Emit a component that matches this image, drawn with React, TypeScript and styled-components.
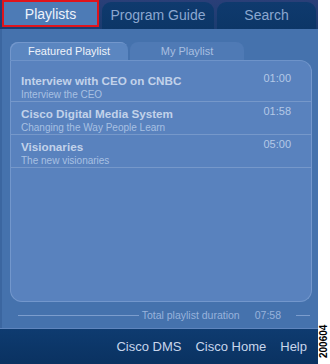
import React from "react";
import styled, { createGlobalStyle } from "styled-components";

const GlobalStyle = createGlobalStyle`
  html, body {
    margin: 0;
    padding: 0;
    background: #ffffff;
  }
  body {
    font-family: "Liberation Sans", Arial, sans-serif;
  }
`;

interface Item {
  title: string;
  subtitle: string;
  time: string;
}

const items: Item[] = [
  { title: "Interview with CEO on CNBC", subtitle: "Interview the CEO", time: "01:00" },
  { title: "Cisco Digital Media System", subtitle: "Changing the Way People Learn", time: "01:58" },
  { title: "Visionaries", subtitle: "The new visionaries", time: "05:00" },
];

const Page = styled.div`
  display: flex;
  width: 330px;
  height: 364px;
`;

const Main = styled.div`
  width: 318px;
  display: flex;
  flex-direction: column;
  background: #4572ad;
`;

const TabBar = styled.div`
  height: 29px;
  display: flex;
  align-items: flex-end;
  gap: 3px;
  padding: 0 2px;
  background: linear-gradient(#2a3f78, #1a3c70);
  box-sizing: border-box;
`;

const Tab = styled.div<{ $active?: boolean; $w: number }>`
  width: ${(p) => p.$w}px;
  height: 27px;
  box-sizing: border-box;
  display: flex;
  align-items: center;
  justify-content: center;
  padding-bottom: ${(p) => (p.$active ? "0" : "2px")};
  font-size: 14px;
  color: ${(p) => (p.$active ? "#eef3fb" : "#8ba7d0")};
  background: ${(p) => (p.$active ? "#4d7bb6" : "linear-gradient(#0f3a6e, #0c3667)")};
  border: ${(p) => (p.$active ? "2px solid #e0141c" : "none")};
  border-radius: ${(p) => (p.$active ? "0" : "9px 9px 0 0")};
  margin-bottom: ${(p) => (p.$active ? "2px" : "0")};
`;

const Body = styled.div`
  flex: 1;
  display: flex;
  flex-direction: column;
  padding: 13px 6px 0 8px;
  border-left: 2px solid #3b66a0;
`;

const SubTabs = styled.div`
  display: flex;
  gap: 2px;
  height: 18px;
`;

const SubTab = styled.div<{ $active?: boolean; $w: number }>`
  width: ${(p) => p.$w}px;
  display: flex;
  align-items: center;
  justify-content: center;
  font-size: 11px;
  color: ${(p) => (p.$active ? "#eef3fb" : "#a9bfe0")};
  background: ${(p) => (p.$active ? "#5b86c0" : "#4f7ab5")};
  border-radius: 8px 8px 0 0;
  box-shadow: ${(p) => (p.$active ? "inset 1px 1px 0 #7397cc" : "none")};
`;

const Panel = styled.div`
  height: 242px;
  box-sizing: border-box;
  background: #5982be;
  border: 1px solid #7397cc;
  border-top-color: #6e93c9;
  border-radius: 0 12px 12px 12px;
  padding-top: 8px;
  display: flex;
  flex-direction: column;
`;

const Row = styled.div`
  height: 33px;
  box-sizing: border-box;
  padding: 4px 20px 0 10px;
  border-bottom: 1px solid #7698ca;
  display: grid;
  grid-template-columns: 1fr auto;
  grid-template-rows: 15px 13px;
`;

const Title = styled.div`
  font-size: 11.7px;
  font-weight: bold;
  color: #c2d2ea;
  line-height: 15px;
`;

const Time = styled.div`
  font-size: 11px;
  color: #b4c8e6;
  line-height: 11px;
`;

const Subtitle = styled.div`
  grid-column: 1 / 3;
  font-size: 10px;
  color: #a8c0e2;
  line-height: 13px;
`;

const TotalRow = styled.div`
  height: 26px;
  display: flex;
  align-items: center;
  gap: 3px;
  padding: 0 2px 0 8px;
`;

const Rule = styled.div<{ $w?: number }>`
  height: 1px;
  background: #7c9dcd;
  flex: ${(p) => (p.$w ? `0 0 ${p.$w}px` : "1")};
`;

const TotalText = styled.span`
  font-size: 10.5px;
  color: #98b3dc;
  margin-right: 12px;
`;

const TotalTime = styled.span`
  font-size: 10.5px;
  color: #98b3dc;
  margin-right: 12px;
`;

const Footer = styled.div`
  height: 36px;
  display: flex;
  align-items: center;
  justify-content: flex-end;
  gap: 14px;
  padding-right: 11px;
  background: linear-gradient(#0e3b70, #0a3261);
  border-top: 1px solid #5f85bd;
  box-sizing: border-box;
`;

const FooterLink = styled.span`
  font-size: 13px;
  color: #c8d6ec;
`;

const Strip = styled.div`
  width: 12px;
  position: relative;
  background: #ffffff;
`;

const Code = styled.span`
  position: absolute;
  left: 0;
  bottom: 6px;
  transform: rotate(-90deg);
  transform-origin: left bottom;
  translate: 11px 0;
  font-size: 10px;
  font-weight: bold;
  color: #000;
  white-space: nowrap;
`;

export default function App() {
  return (
    <Page>
      <GlobalStyle />
      <Main>
        <TabBar>
          <Tab $active $w={97}>Playlists</Tab>
          <Tab $w={112}>Program Guide</Tab>
          <Tab $w={99}>Search</Tab>
        </TabBar>
        <Body>
          <SubTabs>
            <SubTab $active $w={118}>Featured Playlist</SubTab>
            <SubTab $w={114}>My Playlist</SubTab>
          </SubTabs>
          <Panel>
            {items.map((it) => (
              <Row key={it.title}>
                <Title>{it.title}</Title>
                <Time>{it.time}</Time>
                <Subtitle>{it.subtitle}</Subtitle>
              </Row>
            ))}
          </Panel>
          <TotalRow>
            <Rule />
            <TotalText>Total playlist duration</TotalText>
            <TotalTime>07:58</TotalTime>
            <Rule $w={14} />
          </TotalRow>
        </Body>
        <Footer>
          <FooterLink>Cisco DMS</FooterLink>
          <FooterLink>Cisco Home</FooterLink>
          <FooterLink>Help</FooterLink>
        </Footer>
      </Main>
      <Strip>
        <Code>200604</Code>
      </Strip>
    </Page>
  );
}
